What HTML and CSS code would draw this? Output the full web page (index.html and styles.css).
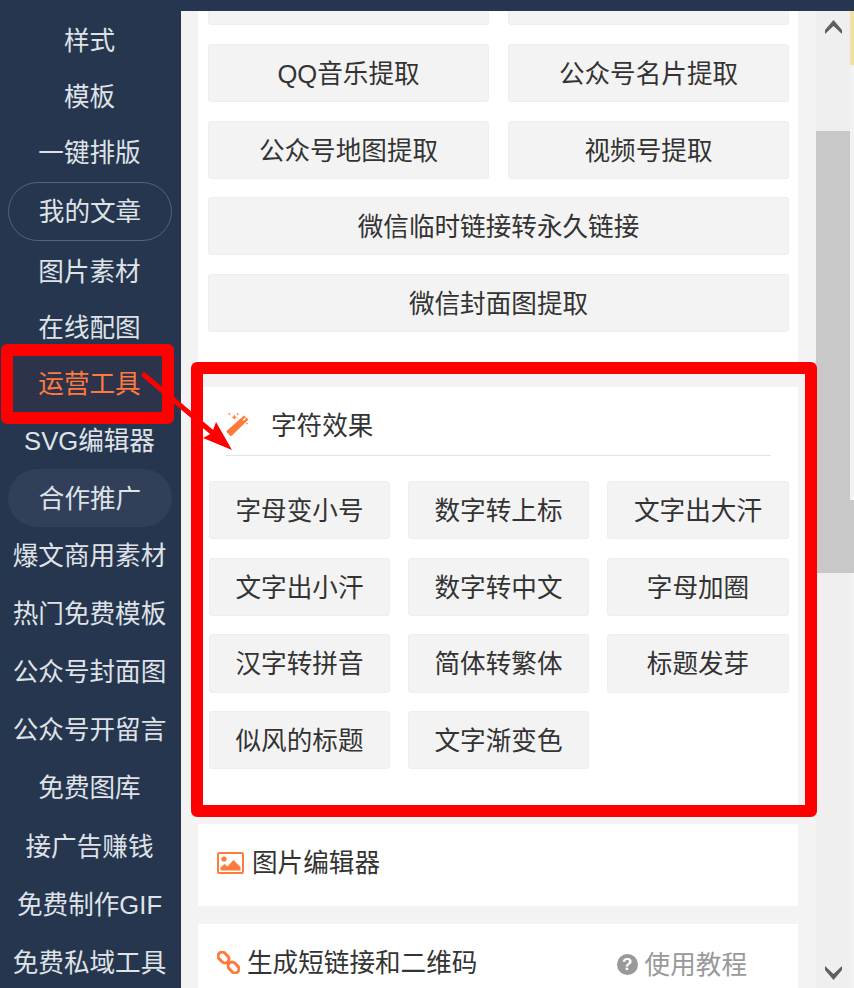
FILE: index.html
```html
<!DOCTYPE html>
<html>
<head>
    <meta charset="utf-8">
    <link rel="stylesheet" href="styles.css">
</head>
<body>
    <div class="topbar"></div>
    <div class="layout">
        <div class="sidebar">
            <a class="nav-item">样式</a>
            <a class="nav-item">模板</a>
            <a class="nav-item">一键排版</a>
            <a class="nav-pill nav-outline">我的文章</a>
            <a class="nav-item">图片素材</a>
            <a class="nav-item">在线配图</a>
            <a class="nav-item nav-active">运营工具</a>
            <a class="nav-item nav-mid">SVG编辑器</a>
            <a class="nav-pill nav-filled">合作推广</a>
            <a class="nav-item nav-tall">爆文商用素材</a>
            <a class="nav-item nav-tall">热门免费模板</a>
            <a class="nav-item nav-tall">公众号封面图</a>
            <a class="nav-item nav-tall">公众号开留言</a>
            <a class="nav-item nav-tall">免费图库</a>
            <a class="nav-item nav-tall">接广告赚钱</a>
            <a class="nav-item nav-tall">免费制作GIF</a>
            <a class="nav-item nav-tall">免费私域工具</a>
        </div>

        <div class="main">
            <div class="card card-extract">
                <div class="btn-grid two">
                    <button class="btn"></button>
                    <button class="btn"></button>
                    <button class="btn">QQ音乐提取</button>
                    <button class="btn">公众号名片提取</button>
                    <button class="btn">公众号地图提取</button>
                    <button class="btn">视频号提取</button>
                    <button class="btn wide">微信临时链接转永久链接</button>
                    <button class="btn wide">微信封面图提取</button>
                </div>
            </div>

            <div class="card card-effects">
                <div class="card-head">
                    <svg class="wand" viewBox="0 0 24 24" width="24" height="24">
                        <path d="M18 3.500L22.500 7.500L6 23.500Q5 24.500 4 23.500L1 20.500Q0 19.500 1 18.500z" fill="#ff7a3d"/>
                        <path d="M16.500 8L19 5.500L20 6.500L17.500 9z" fill="#fff"/>
                        <path d="M8.300 2.300l.8 2.200 2.200.8-2.200.8-.8 2.200-.8-2.200-2.200-.8 2.200-.8zM3.300.5l.4 1.100 1.100.4-1.100.4-.4 1.100-.4-1.100-1.100-.4 1.100-.4zM11.700.5l.4 1.100 1.100.4-1.100.4-.4 1.100-.4-1.100-1.100-.4 1.100-.4zM21 10l.4 1 1 .4-1 .4-.4 1-.4-1-1-.4 1-.4z" fill="#ff7a3d"/>
                    </svg>
                    <span class="card-title">字符效果</span>
                </div>
                <div class="btn-grid three">
                    <button class="btn">字母变小号</button>
                    <button class="btn">数字转上标</button>
                    <button class="btn">文字出大汗</button>
                    <button class="btn">文字出小汗</button>
                    <button class="btn">数字转中文</button>
                    <button class="btn">字母加圈</button>
                    <button class="btn">汉字转拼音</button>
                    <button class="btn">简体转繁体</button>
                    <button class="btn">标题发芽</button>
                    <button class="btn">似风的标题</button>
                    <button class="btn">文字渐变色</button>
                </div>
            </div>

            <div class="card card-image">
                <svg class="card-icon" viewBox="0 0 27 22" width="27" height="22">
                    <rect x="1" y="1" width="25" height="20" rx="1.500" fill="none" stroke="#ff7a3d" stroke-width="2"/>
                    <circle cx="7" cy="7" r="2.600" fill="#ff7a3d"/>
                    <path d="M3.500 18.500v-3l4-3.500 3 2.500 6-6.500 7 7v3.500z" fill="#ff7a3d"/>
                </svg>
                <span class="card-title">图片编辑器</span>
            </div>

            <div class="card card-link">
                <svg class="card-icon" viewBox="0 0 23 23" width="23" height="23">
                    <g fill="none" stroke="#ff7a3d" stroke-width="3">
                        <rect x="0.500" y="2.500" width="12" height="8" rx="4" transform="rotate(45 6.500 6.500)"/>
                        <rect x="10.500" y="12.500" width="12" height="8" rx="4" transform="rotate(45 16.500 16.500)"/>
                    </g>
                </svg>
                <span class="card-title">生成短链接和二维码</span>
                <span class="help"><i class="help-icon">?</i>使用教程</span>
            </div>
        </div>

        <div class="scroll-area">
            <div class="scrollbar">
                <svg class="arrow-up" viewBox="0 0 17 14" width="17" height="14"><path d="M0 10l8.500-10 8.500 10v4l-8.500-8-8.500 8z" fill="#5f5f5f"/></svg>
                <div class="thumb"></div>
                <svg class="arrow-down" viewBox="0 0 17 14" width="17" height="14"><path d="M0 4l8.500 10 8.500-10v-4l-8.500 8-8.500-8z" fill="#5f5f5f"/></svg>
            </div>
            <div class="edge">
                <div class="edge-picture"></div>
                <div class="edge-blank"></div>
                <div class="edge-thumb"></div>
            </div>
        </div>
    </div>

    <div class="mark mark-nav"></div>
    <div class="mark mark-panel"></div>
    <svg class="mark-arrow" viewBox="0 0 854 988" width="854" height="988">
        <path d="M144 375L214 434" stroke="#f00" stroke-width="5" stroke-linecap="round"/>
        <path d="M216 422L232 450L203 438L212 433z" fill="#f00"/>
    </svg>
</body>
</html>
```

FILE: styles.css
```css
* {
    box-sizing: border-box;
}
html, body {
    margin: 0;
    height: 100%;
    overflow: hidden;
}
body {
    font-family: "Liberation Sans", "Noto Sans CJK SC", sans-serif;
    font-size: 25.6px;
    color: #333;
    background: #f3f3f3;
}

.topbar {
    height: 11px;
    background: #27364f;
}
.layout {
    display: flex;
    height: 977px;
}

/* left nav */
.sidebar {
    width: 181px;
    flex: none;
    padding-top: 1px;
    background: #27364f;
    display: flex;
    flex-direction: column;
    align-items: center;
    overflow: hidden;
}
.nav-item {
    flex: none;
    width: 100%;
    height: 56px;
    padding: 0 2px 3px 0;
    display: flex;
    align-items: center;
    justify-content: center;
    color: #dfe3e8;
    white-space: nowrap;
}
.nav-mid {
    height: 57px;
}
.nav-tall {
    height: 58.2px;
    padding-bottom: 6px;
}
.nav-active {
    color: #ff7a3d;
    background: #2c334a;
}
.nav-pill {
    flex: none;
    width: 164px;
    height: 59px;
    margin-right: 1px;
    padding-bottom: 4px;
    display: flex;
    align-items: center;
    justify-content: center;
    color: #dfe3e8;
    border-radius: 30px;
}
.nav-outline {
    margin-top: 2px;
    margin-bottom: 2px;
    border: 1px solid #4e6489;
}
.nav-filled {
    height: 58px;
    margin-top: 1px;
    background: #313f58;
}

/* main column, scrolled down a little */
.main {
    width: 635px;
    flex: none;
    padding: 0 18px 0 17px;
    overflow: hidden;
}
.card {
    background: #fff;
    width: 600px;
}
.card-extract {
    margin-top: -60px;
    height: 418px;
    padding: 16.4px 9px 0 10px;
}
.card-effects {
    margin-top: 18px;
    height: 418px;
    padding: 0 9px 0 11px;
}
.card-head {
    height: 69px;
    margin: 0 18px 25px 17px;
    border-bottom: 1px solid #e4e4e4;
    display: flex;
    align-items: flex-start;
    padding-top: 26px;
}
.wand {
    flex: none;
    margin: -1px 21px 0 0;
}
.card-head .card-title {
    line-height: 26px;
}
.card-title {
    color: #333;
}
.card-image {
    margin-top: 19px;
    height: 82px;
    padding: 0 0 10px 19px;
    display: flex;
    align-items: center;
    gap: 8px;
}
.card-image .card-icon {
    margin-top: 6px;
}
.card-link {
    margin-top: 18px;
    height: 120px;
    padding: 0 51px 48px 19px;
    display: flex;
    align-items: center;
    gap: 7px;
}
.card-link .card-icon {
    margin-top: 5px;
}
.help {
    margin-left: auto;
    padding-top: 4px;
    color: #999;
    display: flex;
    align-items: center;
    gap: 7px;
}
.help-icon {
    width: 21px;
    height: 21px;
    margin-top: 5px;
    border-radius: 50%;
    background: #999;
    color: #fff;
    font-size: 17px;
    font-style: normal;
    font-weight: bold;
    line-height: 21px;
    text-align: center;
}

/* button grids */
.btn-grid {
    display: grid;
    row-gap: 18.67px;
}
.btn-grid.two {
    grid-template-columns: 281px 281px;
    column-gap: 19px;
}
.btn-grid.three {
    grid-template-columns: 181px 181px 182px;
    column-gap: 18px;
    row-gap: 18.33px;
    grid-auto-rows: 58.33px;
}
.btn {
    height: 58px;
    padding: 0 0 3px;
    font: inherit;
    color: #333;
    background: #f3f3f3;
    border: 1px solid #eee;
    border-radius: 3px;
}
.three .btn {
    height: 100%;
}
.wide {
    grid-column: 1 / 3;
}

/* browser scrollbar */
.scroll-area {
    flex: 1;
    display: flex;
}
.scrollbar {
    position: relative;
    width: 34px;
    background: #efefef;
    padding-top: 120px;
}
.thumb {
    height: 442px;
    background: #c8c8c8;
}
.arrow-up {
    position: absolute;
    top: 9px;
    left: 9px;
}
.arrow-down {
    position: absolute;
    bottom: 8px;
    left: 9px;
}
.edge {
    width: 4px;
    background: #f3f3f3;
}
.edge-picture {
    height: 54px;
    background: #f0e1a6;
}
.edge-blank {
    height: 435px;
}
.edge-thumb {
    height: 73px;
    background: #c8c8c8;
}

/* red annotations drawn on top of the screenshot */
.mark {
    position: absolute;
    border: 12px solid #f00;
    border-radius: 6px;
}
.mark-nav {
    left: 1px;
    top: 344px;
    width: 173px;
    height: 80px;
}
.mark-panel {
    left: 191px;
    top: 362px;
    width: 626px;
    height: 455px;
}
.mark-arrow {
    position: absolute;
    left: 0;
    top: 0;
}
```
